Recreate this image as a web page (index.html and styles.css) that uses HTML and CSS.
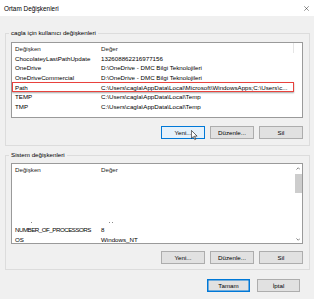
FILE: index.html
```html
<!DOCTYPE html>
<html lang="tr">
<head>
    <meta charset="UTF-8">
    <meta name="viewport" content="width=device-width, initial-scale=1.0">
    <title>Ortam Değişkenleri</title>
    <link rel="stylesheet" href="styles.css">
</head>
<body>
    <div class="titlebar">
        <span class="title">Ortam Değişkenleri</span>
        <svg class="close" viewBox="0 0 10 10"><path d="M0.5 0.5 L9.5 9.5 M9.5 0.5 L0.5 9.5" stroke="#111" stroke-width="0.9" fill="none"/></svg>
    </div>

    <div class="content">
        <fieldset class="group group-user">
            <legend>cagla için kullanıcı değişkenleri</legend>
            <div class="list list-user">
                <div class="list-head divided">
                    <span class="col-name">Değişken</span>
                    <span class="col-value">Değer</span>
                </div>
                <div class="row"><span class="col-name">ChocolateyLastPathUpdate</span><span class="col-value">132608862216977156</span></div>
                <div class="row"><span class="col-name">OneDrive</span><span class="col-value">D:\OneDrive - DMC Bilgi Teknolojileri</span></div>
                <div class="row"><span class="col-name">OneDriveCommercial</span><span class="col-value">D:\OneDrive - DMC Bilgi Teknolojileri</span></div>
                <div class="row row-marked"><span class="col-name">Path</span><span class="col-value">C:\Users\cagla\AppData\Local\Microsoft\WindowsApps;C:\Users\c...</span></div>
                <div class="row"><span class="col-name">TEMP</span><span class="col-value">C:\Users\cagla\AppData\Local\Temp</span></div>
                <div class="row"><span class="col-name">TMP</span><span class="col-value">C:\Users\cagla\AppData\Local\Temp</span></div>
            </div>
            <div class="buttons">
                <button class="btn btn-hot">Yeni...
                    <svg class="cursor" viewBox="0 0 8 12"><path d="M0.5 0.5 L0.5 9.5 L2.7 7.5 L4.3 11 L5.6 10.4 L4 7 L7 7 Z" fill="#fff" stroke="#111" stroke-width="0.7" stroke-linejoin="round"/></svg>
                </button>
                <button class="btn">Düzenle...</button>
                <button class="btn">Sil</button>
            </div>
        </fieldset>

        <fieldset class="group group-system">
            <legend>Sistem değişkenleri</legend>
            <div class="list list-system">
                <div class="list-main">
                    <div class="list-head">
                        <span class="col-name">Değişken</span>
                        <span class="col-value">Değer</span>
                    </div>
                    <div class="list-blank"></div>
                    <div class="row row-ghost"><span class="col-name"><i class="dot dot-a"></i></span><span class="col-value"><i class="dot dot-b"></i><i class="dot"></i></span></div>
                    <div class="row"><span class="col-name tight">NUMBER_OF_PROCESSORS</span><span class="col-value">8</span></div>
                    <div class="row"><span class="col-name">OS</span><span class="col-value">Windows_NT</span></div>
                </div>
                <div class="scrollbar">
                    <svg class="arrow" viewBox="0 0 6 4"><path d="M0.6 3.4 L3 1 L5.4 3.4" stroke="#606060" stroke-width="1" fill="none"/></svg>
                    <div class="thumb"></div>
                    <div class="track"></div>
                    <svg class="arrow" viewBox="0 0 6 4"><path d="M0.6 0.6 L3 3 L5.4 0.6" stroke="#606060" stroke-width="1" fill="none"/></svg>
                </div>
            </div>
            <div class="buttons buttons-system">
                <button class="btn">Yeni...</button>
                <button class="btn">Düzenle...</button>
                <button class="btn">Sil</button>
            </div>
        </fieldset>
    </div>

    <div class="footer">
        <button class="btn btn-main btn-default">Tamam</button>
        <button class="btn btn-main">İptal</button>
    </div>
</body>
</html>
```

FILE: styles.css
```css
*{
    margin: 0;
    padding: 0;
    box-sizing: border-box;
    font-family: "Liberation Sans", Arial, sans-serif;
}
body{
    width: 314px;
    height: 299px;
    overflow: hidden;
    background: #f0f0f0;
    color: #000;
    font-size: 6.2px;
}
.titlebar{
    height: 16px;
    background: #fff;
    display: flex;
    align-items: center;
    justify-content: space-between;
    padding: 0 5px 0 4px;
}
.titlebar .title{
    font-size: 6.4px;
    color: #000;
}
.titlebar .close{
    width: 5px;
    height: 5px;
}
.content{
    padding: 0 4px 0 5px;
}
.group{
    border: 1px solid #dcdcdc;
    padding: 5px 6px 6px 5px;
    margin-top: 13px;
}
.group legend{
    font-size: 6.2px;
    line-height: 8px;
    padding: 0 2px;
    margin-left: -2px;
    color: #000;
}
.group-system{
    margin-top: 5px;
    padding-top: 4px;
    padding-bottom: 5px;
}
.list{
    background: #fff;
    border: 1px solid #9a9a9a;
    height: 76px;
    overflow: hidden;
}
.list-system{
    height: 81px;
    display: flex;
}
.list-main{
    flex: 1;
    display: flex;
    flex-direction: column;
    overflow: hidden;
}
.list-head{
    display: flex;
    align-items: center;
    height: 10.2px;
    flex-shrink: 0;
    color: #1e1e1e;
}
.list-head.divided{
    width: calc(100% - 8px);
    border-right: 1px solid #e5e5e5;
}
.row{
    display: flex;
    align-items: center;
    height: 9.7px;
    flex-shrink: 0;
    white-space: nowrap;
}
.col-name{
    width: 89px;
    flex-shrink: 0;
    padding-left: 3px;
    overflow: hidden;
}
.col-name.tight{
    letter-spacing: -0.5px;
}
.col-value{
    white-space: nowrap;
}
.row-marked{
    margin-right: 8px;
    outline: 1.6px solid #e8423d;
    outline-offset: -1.6px;
    box-shadow: 0 1px 1.5px rgba(0, 0, 0, 0.35);
}
.list-blank{
    flex: 0 0 41px;
}
.row-ghost .dot{
    display: inline-block;
    width: 1px;
    height: 1px;
    background: #8a8a8a;
    margin-top: 5px;
    margin-right: 2px;
}
.row-ghost .dot-a{
    margin-left: 16px;
}
.row-ghost .dot-b{
    margin-left: 8px;
}
.scrollbar{
    width: 8px;
    display: flex;
    flex-direction: column;
    align-items: center;
    padding: 3px 0 2px;
}
.scrollbar .arrow{
    width: 4.5px;
    height: 3px;
    flex-shrink: 0;
}
.scrollbar .thumb{
    width: 7px;
    height: 19px;
    margin-top: 4px;
    background: #cdcdcd;
}
.scrollbar .track{
    flex: 1;
}
.buttons{
    display: flex;
    justify-content: flex-end;
    gap: 5px;
    margin-top: 8px;
}
.buttons-system{
    margin-top: 7px;
}
.btn{
    width: 44px;
    height: 13px;
    border: 1px solid #adadad;
    background: #e1e1e1;
    font-size: 6.2px;
    color: #000;
    display: flex;
    align-items: center;
    justify-content: center;
}
.btn-hot{
    position: relative;
    border-color: #0078d7;
    background: #e5f1fb;
}
.btn-hot .cursor{
    position: absolute;
    left: 29px;
    top: 3px;
    width: 7px;
    height: 10.5px;
}
.footer{
    display: flex;
    justify-content: flex-end;
    gap: 7px;
    padding-right: 14px;
    margin-top: 9px;
}
.btn-main{
    width: 43px;
}
.btn-default{
    border-color: #0078d7;
    box-shadow: inset 0 0 0 0.5px #0078d7;
}
```
